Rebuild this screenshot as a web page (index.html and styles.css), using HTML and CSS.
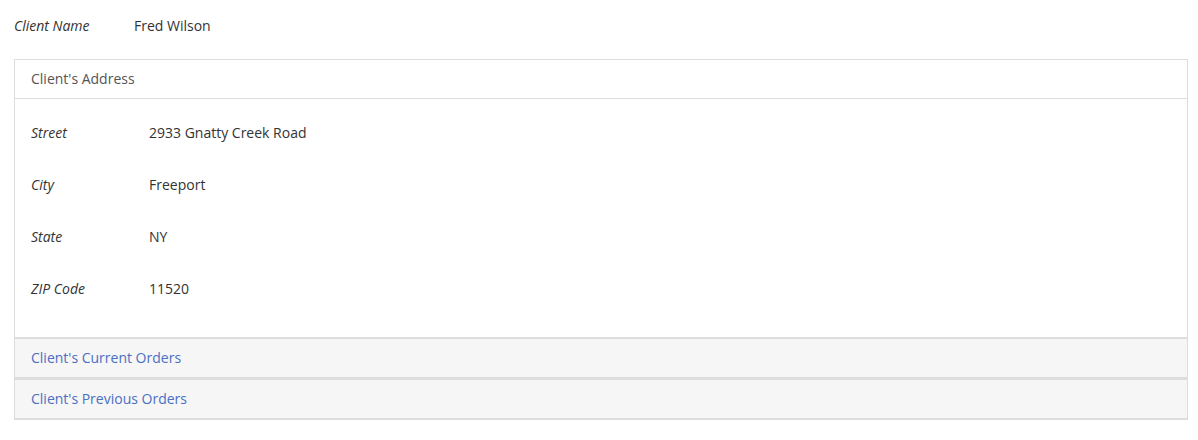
FILE: index.html
```html
<!DOCTYPE html>
<html lang="en">
<head>
  <meta charset="UTF-8">
  <meta name="viewport" content="width=device-width, initial-scale=1.0">
  <title>Client Details</title>
  <link rel="stylesheet" href="styles.css">
</head>
<body>

  <!-- Nombre del cliente -->
  <div class="client-row">
    <span class="client-label">Client Name</span>
    <span class="client-value">Fred Wilson</span>
  </div>

  <div class="accordion">
    <div class="panel">
      <div class="panel-heading">Client's Address</div>
      <div class="panel-body">
        <div class="field">
          <span class="field-label">Street</span>
          <span class="field-value">2933 Gnatty Creek Road</span>
        </div>
        <div class="field">
          <span class="field-label">City</span>
          <span class="field-value">Freeport</span>
        </div>
        <div class="field">
          <span class="field-label">State</span>
          <span class="field-value">NY</span>
        </div>
        <div class="field">
          <span class="field-label">ZIP Code</span>
          <span class="field-value">11520</span>
        </div>
      </div>
    </div>

    <div class="panel collapsed">
      <div class="panel-heading"><a href="#">Client's Current Orders</a></div>
    </div>

    <div class="panel collapsed">
      <div class="panel-heading"><a href="#">Client's Previous Orders</a></div>
    </div>
  </div>

</body>
</html>
```

FILE: styles.css
```css
body {
  font-family: "Segoe UI", "Open Sans", sans-serif;
  font-size: 14px;
  line-height: 20px;
  color: #333;
  margin: 0 10px 0 14px;
  padding: 0;
  background-color: white;
}

.client-row {
  display: flex;
  padding-top: 16px;
  height: 59px;
  box-sizing: border-box;
}

.client-label {
  width: 120px;
  font-style: italic;
}

.panel {
  border: 1px solid #ddd;
  background-color: white;
}

.panel-heading {
  height: 38px;
  line-height: 38px;
  padding: 0 16px;
  border-bottom: 1px solid #ddd;
  color: #555;
}

.collapsed .panel-heading {
  background-color: #f6f6f6;
}

.panel-heading a {
  color: #4a6fc3;
  text-decoration: none;
}

.panel-body {
  padding: 24px 16px 38px;
  display: flex;
  flex-direction: column;
  gap: 32px;
}

.field {
  display: flex;
}

.field-label {
  width: 118px;
  font-style: italic;
}
```
